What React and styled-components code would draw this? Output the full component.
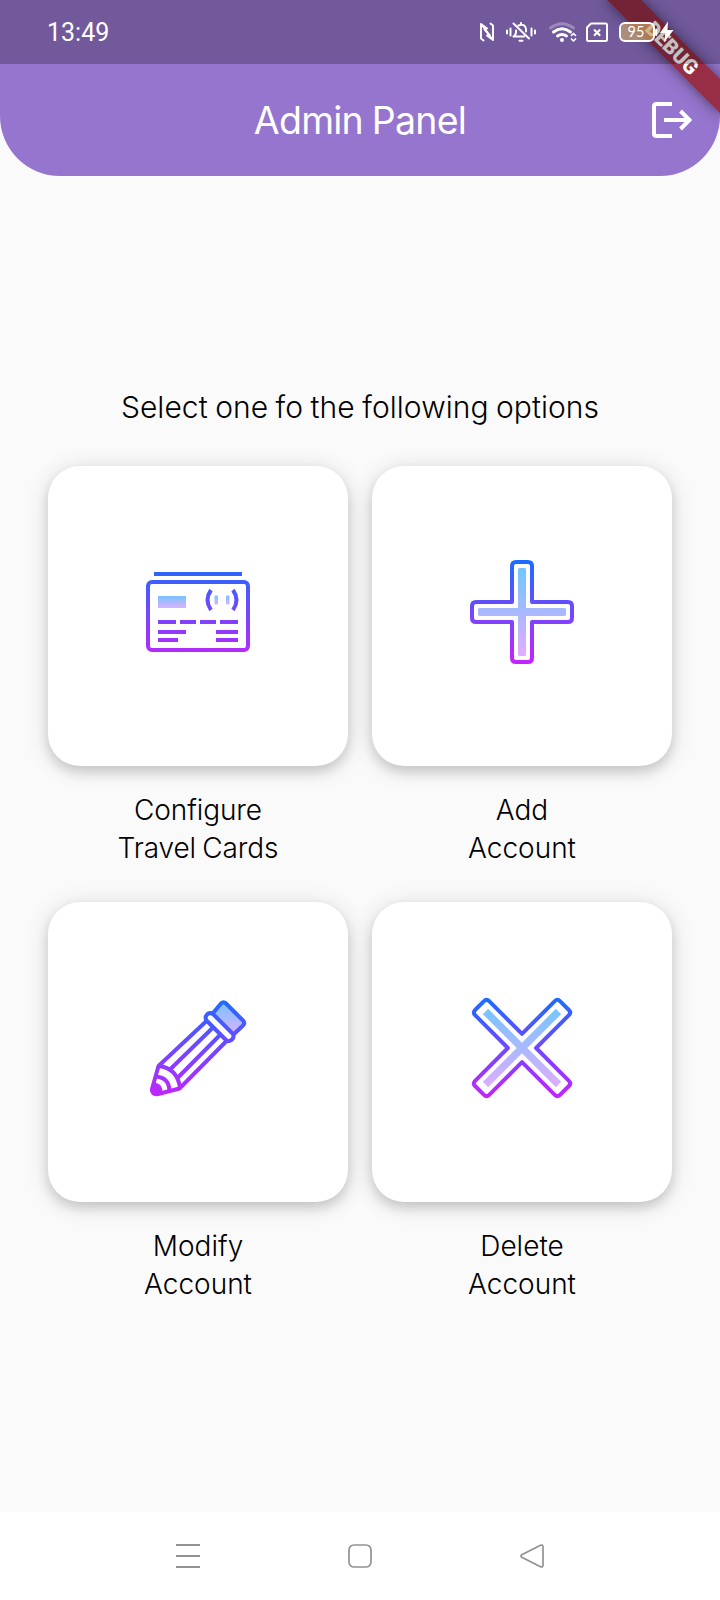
import React from "react";
import styled, { createGlobalStyle } from "styled-components";

const GlobalStyle = createGlobalStyle`
  * { box-sizing: border-box; }
  body { margin: 0; background: #fafafa; font-family: Inter, "Liberation Sans", sans-serif; color: #000; }
  svg { display: block; flex: none; }
`;

const Screen = styled.div`
  position: relative;
  display: flex;
  flex-direction: column;
  width: 720px;
  height: 1600px;
  overflow: hidden;
  background: #fafafa;
`;

const StatusBar = styled.div`
  position: absolute;
  z-index: 3;
  top: 0;
  left: 0;
  display: flex;
  align-items: center;
  justify-content: space-between;
  width: 100%;
  height: 64px;
  padding: 0 46px 0 47px;
  background: rgba(0, 0, 0, 0.24);
  color: #fff;
`;

const Clock = styled.span`
  padding-top: 1px;
  font: 400 25px/30px Roboto, sans-serif;
`;

const StatusIcons = styled.div`
  display: flex;
  align-items: center;
`;

const StatusIcon = styled.svg`
  margin-left: ${(p) => p.$gap || 0}px;
  fill: none;
  stroke: #fff;
  stroke-width: 2;
  stroke-linecap: round;
  stroke-linejoin: round;
`;

const Battery = styled.div`
  display: flex;
  align-items: center;
  justify-content: center;
  width: 36px;
  height: 20px;
  margin-left: 11px;
  border: 2px solid #fff;
  border-radius: 6px;
  background: rgba(215, 175, 105, 0.62);
  font: 400 14.5px/16px Lato, sans-serif;
  padding-right: 2px;
`;

const Header = styled.header`
  display: grid;
  grid-template-columns: 1fr auto 1fr;
  align-items: center;
  flex: none;
  height: 176px;
  padding: 64px 28px 0;
  border-radius: 0 0 60px 60px;
  background: #9575cd;
`;

const Title = styled.h1`
  grid-column: 2;
  margin: 0;
  padding-top: 2px;
  color: #fff;
  font-size: 37.5px;
  font-weight: 400;
  line-height: 48px;
  letter-spacing: -0.75px;
  word-spacing: -1px;
`;

const LogoutButton = styled.button`
  justify-self: end;
  padding: 0;
  border: 0;
  background: none;
`;

const RibbonCorner = styled.div`
  position: absolute;
  z-index: 2;
  top: 0;
  right: 0;
  width: 150px;
  height: 150px;
  overflow: hidden;
  pointer-events: none;
`;

const Ribbon = styled.div`
  position: absolute;
  top: 56px;
  left: 70px;
  width: 160px;
  height: 24px;
  background: rgba(151, 24, 28, 0.76);
  box-shadow: 0 0 14px rgba(0, 0, 0, 0.5);
  color: #fff;
  font: 900 20.4px/24px Roboto, sans-serif;
  text-align: center;
  transform: rotate(45deg);
  transform-origin: 80px -56px;
`;

const Content = styled.main`
  display: flex;
  flex-direction: column;
  flex: 1;
  padding: 211px 48px 0;
`;

const Prompt = styled.p`
  margin: 0 0 39px;
  font-size: 30px;
  font-weight: 320;
  line-height: 40px;
  letter-spacing: 0.05px;
  word-spacing: -1px;
  text-align: center;
  white-space: nowrap;
`;

const Options = styled.div`
  display: grid;
  grid-template-columns: 300px 300px;
  gap: 34px 24px;
`;

const Option = styled.div`
  display: flex;
  flex-direction: column;
  gap: 25px;
  height: 402px;
`;

const Tile = styled.div`
  display: flex;
  align-items: center;
  justify-content: center;
  flex: none;
  height: 300px;
  padding-bottom: 8px;
  border-radius: 32px;
  background: #fff;
  box-shadow: 0 6px 12px rgba(0, 0, 0, 0.14), 0 3px 24px rgba(0, 0, 0, 0.13);
`;

const OptionLabel = styled.div`
  font-size: 28px;
  font-weight: 320;
  line-height: 38px;
  letter-spacing: ${(p) => p.$spacing}px;
  word-spacing: -1.5px;
  text-align: center;
  white-space: pre-line;
`;

const NavBar = styled.nav`
  display: flex;
  align-items: center;
  justify-content: center;
  gap: 148px;
  flex: none;
  height: 88px;
  background: #fff;
`;

const NavIcon = styled.svg`
  fill: none;
  stroke: #929292;
  stroke-width: 2;
  stroke-linejoin: round;
`;

const Art = ({ id, children }) => (
  <svg width="120" height="120" viewBox="0 0 120 120" fill="none" strokeLinejoin="round">
    <defs>
      <linearGradient id={`${id}-line`} gradientUnits="userSpaceOnUse" x1="0" y1="8" x2="0" y2="112">
        <stop offset="0" stopColor="#1a6dff" />
        <stop offset="1" stopColor="#c822ff" />
      </linearGradient>
      <linearGradient id={`${id}-soft`} gradientUnits="userSpaceOnUse" x1="0" y1="14" x2="0" y2="106">
        <stop offset="0" stopColor="#6dc7ff" />
        <stop offset="1" stopColor="#e6abff" />
      </linearGradient>
      <linearGradient id={`${id}-fade`} gradientUnits="objectBoundingBox" x1="0" y1="0" x2="0" y2="1">
        <stop offset="0" stopColor="#79c2ff" />
        <stop offset="1" stopColor="#d9b2ff" />
      </linearGradient>
    </defs>
    {children}
  </svg>
);

const CardArt = () => (
  <Art id="card">
    <g stroke="url(#card-line)" strokeWidth="4">
      <rect x="10" y="30" width="100" height="68" rx="4" />
      <path d="M73 38Q66 48 73 58M95 38Q102 48 95 58" />
    </g>
    <g fill="url(#card-line)">
      <rect x="16" y="20" width="88" height="4" />
      <path d="M20 68h18v4H20zM42 68h16v4H42zM62 68h16v4H62zM82 68h18v4H82zM20 78h28v4H20zM78 78h22v4H78zM20 86h20v4H20zM78 86h22v4H78z" />
    </g>
    <rect x="20" y="44" width="28" height="12" fill="url(#card-fade)" />
    <rect x="76.5" y="43.5" width="3.5" height="9" rx="1" fill="url(#card-fade)" />
    <rect x="88" y="43.5" width="3.5" height="9" rx="1" fill="url(#card-fade)" />
  </Art>
);

const PlusArt = () => (
  <Art id="plus">
    <path
      stroke="url(#plus-line)"
      strokeWidth="4"
      d="M54 10h12q4 0 4 4v36h36q4 0 4 4v12q0 4-4 4H70v36q0 4-4 4H54q-4 0-4-4V70H14q-4 0-4-4V54q0-4 4-4h36V14q0-4 4-4z"
    />
    <path
      fill="url(#plus-soft)"
      d="M57.500 16h5q1.500 0 1.500 1.500V56h38.500q1.500 0 1.500 1.500v5q0 1.500-1.500 1.500H64v38.500q0 1.500-1.500 1.500h-5q-1.500 0-1.500-1.500V64H17.500q-1.500 0-1.500-1.500v-5q0-1.500 1.500-1.500H56V17.500q0-1.500 1.500-1.500z"
    />
  </Art>
);

const PencilArt = () => (
  <Art id="pencil">
    <path d="M75 25L83.500 16Q85.500 14 87.500 16L105 33Q107 35 105 37L96 46z" fill="url(#pencil-fade)" />
    <g stroke="url(#pencil-line)" strokeWidth="4">
      <path d="M75 25L83 15.500Q85.500 13 88 15.500L105 32.500Q107.500 35 105 37.500L96 46" />
      <path d="M69 26.500Q71.500 24 75 26L95 46Q96.500 49 94 51.500L92.500 52.500Q90.500 54 88 52L68.500 32.500Q66.500 29.500 69 26.500z" />
      <path d="M68.500 33L20.500 78L14 101Q13.500 107 20 106L41.500 100.500L88.500 53" />
      <path d="M74 40.500L30.500 83M81.500 47.500L38.500 91" />
      <path d="M20.500 78Q39.500 80 42 100M17 88.500Q31 89 31.500 103" />
    </g>
    <path d="M14.500 94.500Q25 94.500 24.500 105.500L18.500 107Q11 107 13 99z" fill="url(#pencil-line)" />
  </Art>
);

const CrossArt = () => (
  <Art id="cross">
    <path
      stroke="url(#cross-line)"
      strokeWidth="4"
      d="M60 45.900L92.800 13.100Q95.400 10.500 98 13.100L106.900 22Q109.500 24.600 106.900 27.200L74.100 60L106.900 92.800Q109.500 95.400 106.900 98L98 106.900Q95.400 109.500 92.800 106.900L60 74.100L27.200 106.900Q24.600 109.500 22 106.900L13.100 98Q10.500 95.400 13.100 92.800L45.900 60L13.100 27.200Q10.500 24.600 13.100 22L22 13.100Q24.600 10.500 27.200 13.100z"
    />
    <path stroke="url(#cross-soft)" strokeWidth="7.500" d="M23.500 23.500L96.500 96.500M96.500 23.500L23.500 96.500" />
  </Art>
);

const OPTIONS = [
  { label: "Configure\nTravel Cards", art: CardArt, spacing: -0.1 },
  { label: "Add\nAccount", art: PlusArt, spacing: 0 },
  { label: "Modify\nAccount", art: PencilArt, spacing: 0 },
  { label: "Delete\nAccount", art: CrossArt, spacing: 0 },
];

export default function App() {
  return (
    <Screen>
      <GlobalStyle />
      <StatusBar>
        <Clock>13:49</Clock>
        <StatusIcons>
          <StatusIcon width="14" height="20" viewBox="480 22 14 20">
            <path
              strokeWidth="1.900"
              d="M483.500 40.500L481 38.500V24L490 35.500M490.500 23.500L493 25.500V40L484.500 29.500M481 24L487 28.500M493 40L487 35.500"
            />
          </StatusIcon>
          <StatusIcon $gap={11} width="32" height="20" viewBox="505 22 32 20">
            <path d="M507 30.500v3M510.500 28.500v7M531.500 28.500v7M535 30.500v3M513.500 23.500L529 38.500M513.500 36.500Q516 35 516 32V30.500M513.500 36.500H524M518.500 25.500Q525 23 526 29V31.500M521 23V24M519.500 40.800h3" />
          </StatusIcon>
          <StatusIcon $gap={12} width="28" height="20" viewBox="549 22 28 20">
            <path opacity=".3" d="M550.500 28Q562 19.500 573.500 28" strokeWidth="2.800" />
            <path d="M553.500 32Q562 25.500 570.500 32M557.500 36Q562 33 566.500 36" strokeWidth="2.900" />
            <circle cx="562" cy="40" r="2" fill="#fff" stroke="none" />
            <path d="M571.500 35.500l2-2 2 2M571.500 39l2 2 2-2" strokeWidth="1.700" />
          </StatusIcon>
          <StatusIcon $gap={9} width="22" height="20" viewBox="586 22 22 20">
            <path d="M591 23.500H605.500Q607 23.500 607 25V39.500Q607 41 605.500 41H588.500Q587 41 587 39.500V27.500z" />
            <path d="M594.700 30.200l4.800 4.800M599.500 30.200l-4.800 4.800" strokeWidth="2.200" />
          </StatusIcon>
          <Battery>95</Battery>
          <StatusIcon width="19" height="22" viewBox="655 21 19 22">
            <path d="M656.200 29.500v5.500" />
            <path d="M668 21.500L660 33h5.500L664 42.500L673.500 30H667.500z" fill="#fff" stroke="none" />
          </StatusIcon>
        </StatusIcons>
      </StatusBar>
      <RibbonCorner>
        <Ribbon>DEBUG</Ribbon>
      </RibbonCorner>
      <Header>
        <Title>Admin Panel</Title>
        <LogoutButton aria-label="Log out">
          <svg width="40" height="36" viewBox="652 102 40 36" fill="none" stroke="#fff" strokeWidth="4">
            <path d="M672 104H656.500Q654 104 654 106.500V133.500Q654 136 656.500 136H672M664 120H689M680.500 111L689.500 120L680.500 129" />
          </svg>
        </LogoutButton>
      </Header>
      <Content>
        <Prompt>Select one fo the following options</Prompt>
        <Options>
          {OPTIONS.map(({ label, art: Picture, spacing }) => (
            <Option key={label}>
              <Tile>
                <Picture />
              </Tile>
              <OptionLabel $spacing={spacing}>{label}</OptionLabel>
            </Option>
          ))}
        </Options>
      </Content>
      <NavBar>
        <NavIcon width="24" height="24" viewBox="0 0 24 24">
          <path d="M0 1h24M0 12h24M0 23h24" />
        </NavIcon>
        <NavIcon width="24" height="24" viewBox="0 0 24 24">
          <rect x="1" y="1" width="22" height="22" rx="5" strokeWidth="1.700" />
        </NavIcon>
        <NavIcon width="24" height="24" viewBox="0 0 24 24">
          <path d="M1.800 10.700L20.500 1.200Q23 .5 23 3V21Q23 23.500 20.500 22.800L1.800 13.300Q0 12 1.800 10.700z" strokeWidth="1.700" />
        </NavIcon>
      </NavBar>
    </Screen>
  );
}
